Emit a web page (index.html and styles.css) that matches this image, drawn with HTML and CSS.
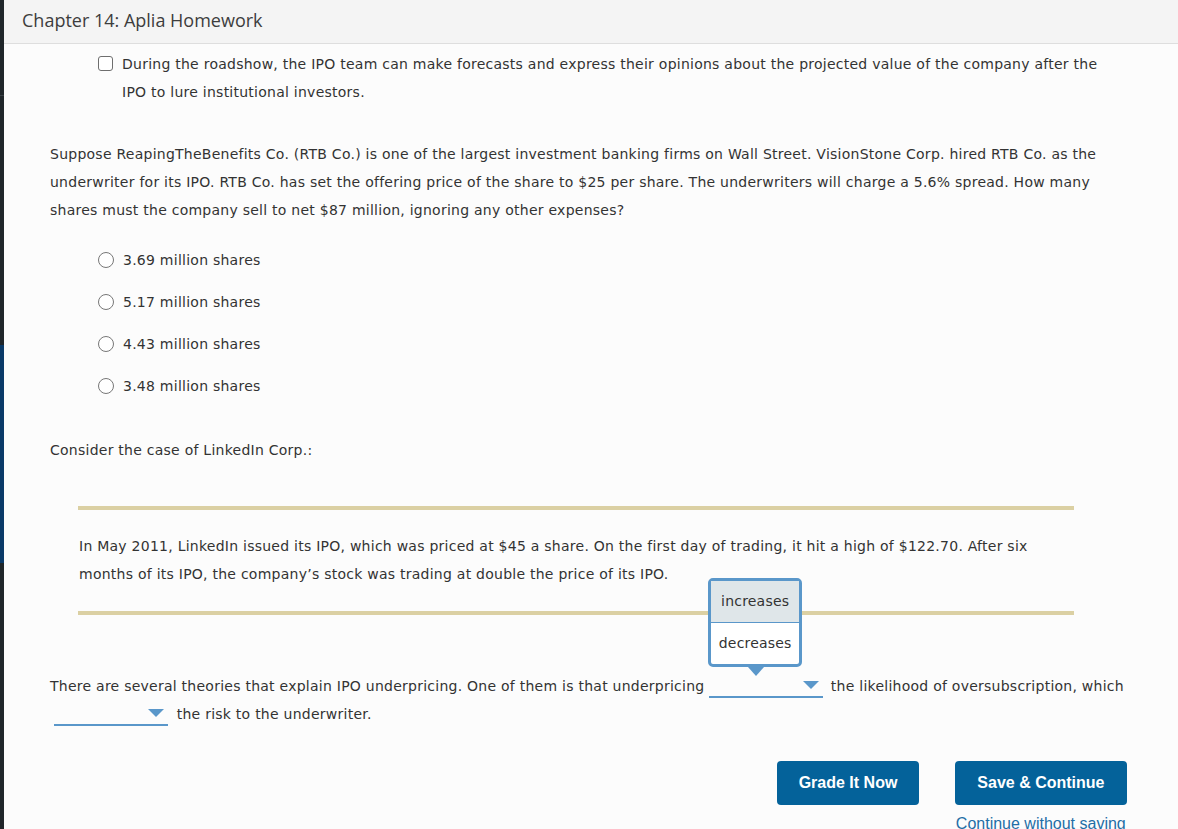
FILE: index.html
```html
<!DOCTYPE html>
<html lang="en">
<head>
<meta charset="utf-8">
<title>Chapter 14: Aplia Homework</title>
<link rel="stylesheet" href="styles.css">
</head>
<body>
<div class="app">
  <div class="rail">
    <div class="rail-top"></div>
    <div class="rail-mid"></div>
    <div class="rail-active"></div>
    <div class="rail-bottom"></div>
  </div>
  <main class="main">
    <header class="header">Chapter 14: Aplia Homework</header>
    <section class="content">
      <div class="check-item">
        <span class="checkbox"></span>
        <p class="check-text">During the roadshow, the IPO team can make forecasts and express their opinions about the projected value of the company after the IPO to lure institutional investors.</p>
      </div>

      <p class="para q1">Suppose ReapingTheBenefits Co. (RTB Co.) is one of the largest investment banking firms on Wall Street. VisionStone Corp. hired RTB Co. as the underwriter for its IPO. RTB Co. has set the offering price of the share to $25 per share. The underwriters will charge a 5.6% spread. How many shares must the company sell to net $87 million, ignoring any other expenses?</p>

      <ul class="radios">
        <li class="radio-row"><span class="radio"></span>3.69 million shares</li>
        <li class="radio-row"><span class="radio"></span>5.17 million shares</li>
        <li class="radio-row"><span class="radio"></span>4.43 million shares</li>
        <li class="radio-row"><span class="radio"></span>3.48 million shares</li>
      </ul>

      <p class="para consider">Consider the case of LinkedIn Corp.:</p>

      <div class="passage">
        <p class="passage-text">In May 2011, LinkedIn issued its IPO, which was priced at $45 a share. On the first day of trading, it hit a high of $122.70. After six months of its IPO, the company’s stock was trading at double the price of its IPO.</p>
      </div>

      <p class="para theory">There are several theories that explain IPO underpricing. One of them is that underpricing <span class="select first"><span class="caret"></span><span class="popup"><span class="opt opt-hover">increases</span><span class="opt">decreases</span></span></span> the likelihood of oversubscription, which <span class="select second"><span class="caret"></span></span> the risk to the underwriter.</p>

      <div class="actions">
        <button class="btn btn-grade">Grade It Now</button>
        <div class="save-col">
          <button class="btn btn-save">Save &amp; Continue</button>
          <a class="skip" href="#">Continue without saving</a>
        </div>
      </div>
    </section>
  </main>
</div>
</body>
</html>
```

FILE: styles.css
```css
html, body {
  margin: 0;
  padding: 0;
  height: 100%;
  overflow: hidden;
}
body {
  background: #fcfcfc;
  font-family: "DejaVu Sans", sans-serif;
  font-size: 14px;
  letter-spacing: 0.25px;
  color: #333;
}
.app {
  display: flex;
  height: 829px;
}
.rail {
  width: 4px;
  flex: none;
  display: flex;
  flex-direction: column;
  background: #20262a;
}
.rail-top { height: 95px; background: #20262a; }
.rail-mid { height: 1px; background: #3a4146; }
.rail-active { margin-top: 249px; height: 218px; background: #0a3a68; }
.rail-bottom { flex: 1; }

.main {
  flex: 1;
  min-width: 0;
}
.header {
  height: 44px;
  box-sizing: border-box;
  background: #f4f4f4;
  border-bottom: 1px solid #dedede;
  padding: 8px 0 0 18px;
  font-family: "Open Sans", sans-serif;
  font-size: 18px;
  letter-spacing: 0;
  color: #3d3d3d;
}
.content {
  padding: 6px 38px 0 46px;
}
p { margin: 0; }

.check-item {
  display: flex;
  align-items: flex-start;
  padding-left: 48px;
}
.checkbox {
  flex: none;
  width: 13px;
  height: 13px;
  border: 1.5px solid #6e6e6e;
  border-radius: 3px;
  margin-top: 6px;
  margin-right: 9px;
  background: #fff;
}
.check-text {
  line-height: 28px;
  padding-right: 30px;
}
.para {
  line-height: 28px;
}
.q1 {
  margin-top: 34px;
  padding-right: 10px;
}

.radios {
  list-style: none;
  margin: 22px 0 0;
  padding: 0 0 0 48px;
  display: flex;
  flex-direction: column;
  gap: 14px;
}
.radio-row {
  display: flex;
  align-items: center;
  height: 28px;
}
.radio {
  width: 14px;
  height: 14px;
  border: 1px solid #777;
  border-radius: 50%;
  margin-right: 9px;
  background: #fff;
}
.consider { margin-top: 36px; }

.passage {
  margin: 42px 66px 0 28px;
  border-top: 4px solid #dbd0a3;
  border-bottom: 4px solid #dbd0a3;
  padding: 22px 0 23px 1px;
}
.passage-text {
  line-height: 28px;
  padding-right: 20px;
}
.theory { margin-top: 57px; }

.select {
  position: relative;
  display: inline-block;
  width: 114px;
  height: 19px;
  border-bottom: 2px solid #5a97ca;
  vertical-align: -7px;
  margin: 0 3px 0 0;
}
.select.second { margin-left: 4px; margin-right: 4px; }
.caret {
  position: absolute;
  right: 4px;
  top: 4px;
  width: 0;
  height: 0;
  border-left: 8.5px solid transparent;
  border-right: 8.5px solid transparent;
  border-top: 8px solid #5a97ca;
}
.popup {
  position: absolute;
  left: -1px;
  bottom: 29px;
  width: 88px;
  border: 3px solid #5a97ca;
  border-radius: 5px;
  background: #fff;
  display: flex;
  flex-direction: column;
}
.popup::after {
  content: "";
  position: absolute;
  left: 37px;
  bottom: -12px;
  border-left: 8px solid transparent;
  border-right: 8px solid transparent;
  border-top: 9px solid #5a97ca;
}
.opt {
  display: block;
  text-align: center;
  line-height: 41px;
  height: 41px;
  letter-spacing: 0.2px;
  color: #333;
}
.opt-hover {
  background: #dfe6e9;
  border-bottom: 1px solid #5a97ca;
}

.actions {
  display: flex;
  justify-content: flex-end;
  gap: 36px;
  margin-top: 33px;
  margin-right: 13px;
}
.save-col {
  display: flex;
  flex-direction: column;
  align-items: flex-start;
}
.btn {
  height: 44px;
  padding: 0 22px;
  border: none;
  border-radius: 4px;
  background: #04629a;
  color: #fff;
  font-family: "Liberation Sans", Arial, sans-serif;
  font-weight: bold;
  font-size: 16px;
  letter-spacing: 0;
  cursor: pointer;
}
.btn-grade { padding: 0 21.5px; }
.btn-save { padding: 0 22.5px; }
.skip {
  margin-top: 10px;
  margin-left: 1px;
  font-family: "Liberation Sans", Arial, sans-serif;
  font-size: 16px;
  letter-spacing: 0;
  color: #1f6ea6;
  text-decoration: none;
}
```
